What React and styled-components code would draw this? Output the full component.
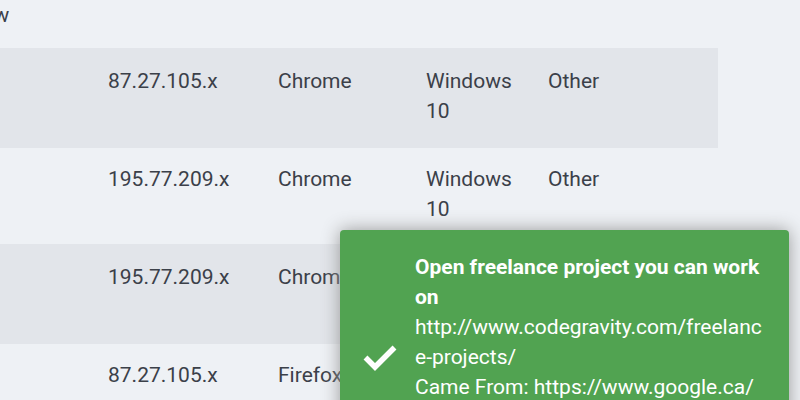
import React from "react";
import styled, { createGlobalStyle } from "styled-components";

const GlobalStyle = createGlobalStyle`
  html, body {
    margin: 0;
    padding: 0;
    background: #eef1f5;
    overflow: hidden;
  }
  body {
    font-family: Roboto, "Liberation Sans", sans-serif;
  }
`;

const Page = styled.div`
  width: 800px;
  height: 400px;
  overflow: hidden;
  position: relative;
`;

const Table = styled.div`
  width: 754px; /* table is scrolled a little past the left edge */
  margin-left: -36px;
  font-size: 21px;
  line-height: 30px;
  color: #3b4049;
`;

const Row = styled.div`
  display: grid;
  grid-template-columns: 144px 170px 148px 122px 170px;
  background: ${(p) => (p.$striped ? "#e2e5ea" : "transparent")};
  padding: ${(p) => (p.$striped ? "18px 0 22px" : "16px 0 20px")};
`;

const HeadRow = styled.div`
  height: 48px;
  line-height: 30px;
`;

const Cell = styled.div`
  padding-right: 28px;
  min-height: 60px;
`;

const Toast = styled.div`
  position: absolute; /* notification floats over the table */
  left: 340px;
  top: 230px;
  width: 449px;
  min-height: 256px;
  box-sizing: border-box;
  display: flex;
  background: #51a351;
  border-radius: 4px;
  box-shadow: 0 0 18px #999;
  color: #fff;
  font-size: 21px;
  line-height: 30px;
`;

const IconCell = styled.div`
  width: 75px;
  flex: none;
  display: flex;
  align-items: center;
  padding-left: 22px;
  box-sizing: border-box;
`;

const Body = styled.div`
  flex: 1;
  padding: 22px 22px 22px 0;
  min-width: 0;
`;

const Title = styled.div`
  font-weight: bold;
`;

const Message = styled.div`
  overflow-wrap: anywhere;
`;

const rows = [
  ["87.27.105.x", "Chrome", "Windows 10", "Other"],
  ["195.77.209.x", "Chrome", "Windows 10", "Other"],
  ["195.77.209.x", "Chrome", "Windows 10", "Other"],
  ["87.27.105.x", "Firefox", "Windows 10", "Other"],
];

const Check = () => (
  <svg width="36" height="28" viewBox="0 0 36 28">
    <polyline
      points="3.5,13.5 13,23 32.5,3.5"
      fill="none"
      stroke="#fff"
      strokeWidth="5.5"
    />
  </svg>
);

const App = () => {
  return (
    <Page>
      <GlobalStyle />
      <Table>
        <HeadRow>View</HeadRow>
        {rows.map((r, i) => (
          <Row key={i} $striped={i % 2 === 0}>
            <Cell />
            {r.map((c, j) => (
              <Cell key={j}>{c}</Cell>
            ))}
          </Row>
        ))}
      </Table>
      <Toast>
        <IconCell>
          <Check />
        </IconCell>
        <Body>
          <Title>Open freelance project you can work on</Title>
          <Message>
            http://www.codegravity.com/freelance-projects/
            <br />
            Came From: https://www.google.ca/
          </Message>
        </Body>
      </Toast>
    </Page>
  );
};

export default App;
